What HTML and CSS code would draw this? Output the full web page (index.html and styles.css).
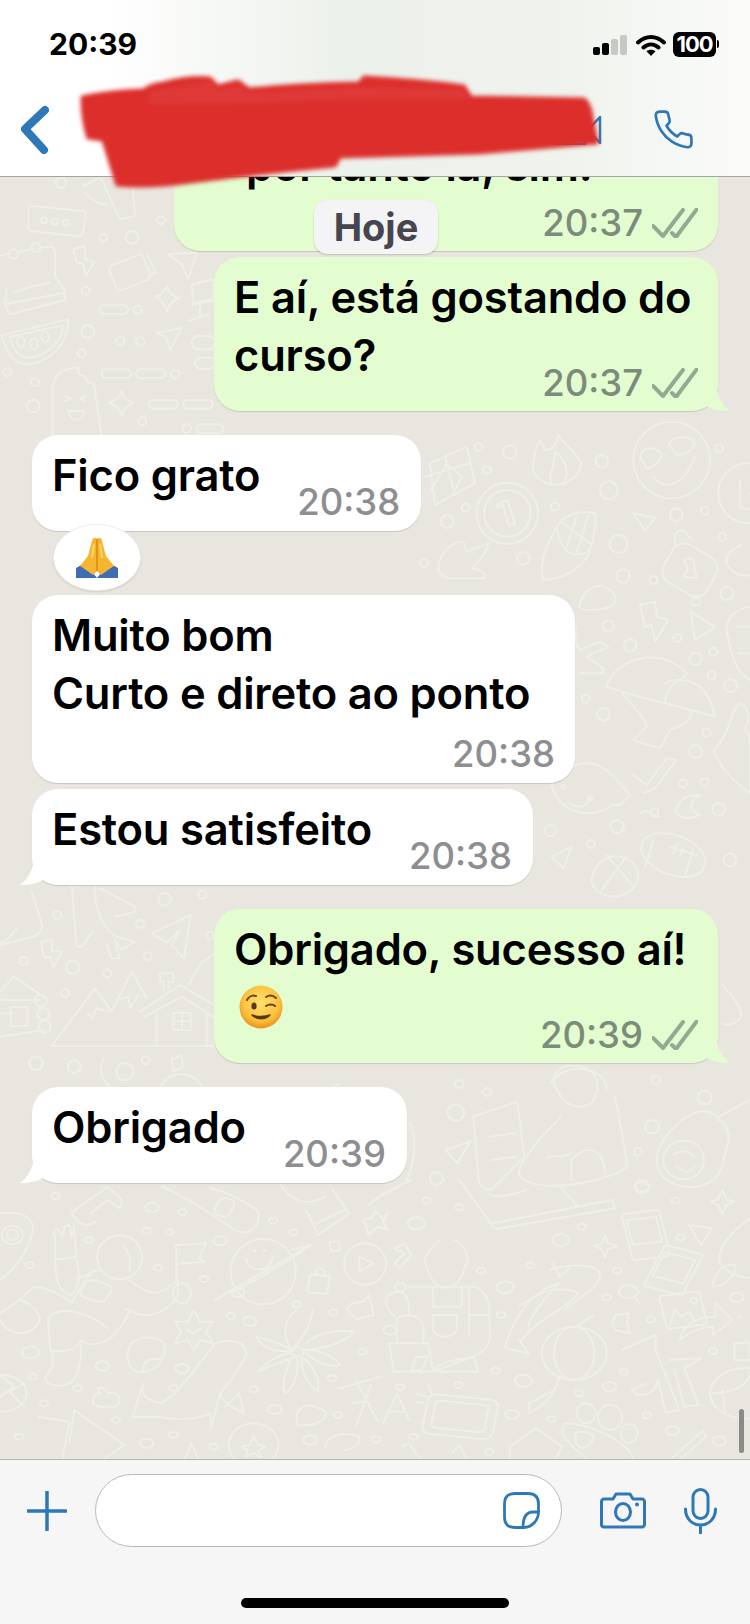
FILE: index.html
```html
<!DOCTYPE html>
<html lang="pt-BR">
<head>
    <meta charset="UTF-8">
    <meta name="viewport" content="width=device-width, initial-scale=1.0">
    <title>Conversa</title>
    <link rel="stylesheet" href="styles.css">
</head>
<body>
<div class="phone">
    <header class="topbar">
        <div class="status">
            <span class="clock">20:39</span>
            <div class="status-icons">
                <div class="signal"><i></i><i></i><i class="off"></i><i class="off"></i></div>
                <svg class="wifi" viewBox="0 0 30 22"><path d="M2 8.5C10 1 20 1 28 8.5M7.5 13.5c4.500-4 10.500-4 15 0" fill="none" stroke="#000" stroke-width="4" stroke-linecap="round"/><path d="M15 22l-4.500-4.800c2.700-2 6.300-2 9 0z"/></svg>
                <div class="battery"><span>100</span></div>
            </div>
        </div>
        <nav class="nav">
            <svg class="back" viewBox="0 0 30 49"><path d="M26 5L6 24l19 21" fill="none" stroke="#2f78b7" stroke-width="8" stroke-linecap="round" stroke-linejoin="round"/></svg>
            <div class="nav-actions">
                <svg class="video" viewBox="0 0 50 30"><path d="M3 1h30v28H3zM48 2v26L36 15z" fill="none" stroke="#2f78b7" stroke-width="2.500" stroke-linejoin="round"/></svg>
                <svg class="call" viewBox="0 0 24 24"><path d="M22 16.900v3a2 2 0 0 1-2.200 2 19.800 19.800 0 0 1-8.600-3.100 19.500 19.500 0 0 1-6-6A19.800 19.800 0 0 1 2.100 4.200 2 2 0 0 1 4.100 2h3a2 2 0 0 1 2 1.700c.1 1 .4 1.900.7 2.800a2 2 0 0 1-.5 2.100L8.100 9.900a16 16 0 0 0 6 6l1.300-1.300a2 2 0 0 1 2.100-.4c.9.3 1.800.6 2.800.7a2 2 0 0 1 1.700 2z" fill="none" stroke="#2f78b7" stroke-width="1.500" stroke-linejoin="round"/></svg>
            </div>
        </nav>
    </header>

    <svg class="scribble" viewBox="0 0 750 200">
        <path d="M82 97Q110 91 143 90 152 84 163 83 190 76 210 78L218 86 238 81 249 89Q300 84 359 83L364 77Q420 80 464 86L471 97 584 99Q590 103 592 117L597 143 478 153 340 157 335 166Q270 172 191 182 150 188 117 185L103 140 88 138Q82 120 82 97z" fill="#dc2f2c" stroke="#dc2f2c" stroke-width="3" stroke-linejoin="round"/>
        <path d="M150 92L210 81 217 90 239 85 248 93 359 87 464 90 468 99 359 99 248 103 150 104z" fill="#df3a38"/>
    </svg>

    <main class="chat">
        <svg class="doodles" viewBox="0 177 750 1282">
            <!-- upper left -->
            <g transform="translate(0 176) scale(.3333)">
                <path d="M95 90L250 105Q260 106 258 118L248 170Q246 182 234 181L95 165Q83 164 85 152L85 100Q86 89 95 90Z"/>
                <circle cx="132" cy="133" r="9"/><circle cx="165" cy="137" r="9"/><circle cx="197" cy="140" r="9"/>
                <circle cx="183" cy="20" r="16"/><circle cx="310" cy="185" r="12"/><circle cx="396" cy="184" r="19"/><circle cx="483" cy="133" r="12"/>
                <circle cx="257" cy="344" r="12"/><circle cx="413" cy="401" r="12"/><circle cx="263" cy="467" r="19"/><circle cx="361" cy="496" r="13"/><circle cx="421" cy="496" r="13"/><circle cx="245" cy="531" r="12"/><circle cx="22" cy="589" r="12"/><circle cx="105" cy="619" r="12"/><circle cx="100" cy="690" r="19"/><circle cx="526" cy="594" r="13"/><circle cx="427" cy="736" r="12"/><circle cx="560" cy="757" r="13"/>
                <rect x="298" y="388" width="86" height="26" rx="13"/><rect x="305" y="580" width="88" height="26" rx="13"/><rect x="408" y="580" width="88" height="26" rx="13"/><rect x="446" y="672" width="88" height="26" rx="13"/><rect x="550" y="672" width="88" height="26" rx="13"/><rect x="590" y="745" width="80" height="26" rx="13"/>
                <path d="M0 240L30 232M55 228L100 218M120 214L155 212Q165 214 165 230V300L192 340 195 372 30 415 14 385 20 340"/>
                <circle cx="40" cy="234" r="14"/><circle cx="108" cy="214" r="14"/><path d="M40 350L100 330 150 320M14 385L195 350"/>
                <path d="M220 220L255 210V250L283 258 258 297 248 262 230 260Z"/>
                <rect x="335" y="250" width="110" height="80" rx="14" transform="rotate(-22 390 290)"/><path d="M440 232L468 290 445 300"/>
                <path d="M5 478L205 430C205 510 140 565 80 565 40 565 15 520 5 478Z"/><path d="M30 482L190 448C185 505 130 545 85 545 55 545 38 515 30 482Z"/>
                <ellipse cx="62" cy="497" rx="11" ry="16"/><ellipse cx="102" cy="503" rx="11" ry="16"/><ellipse cx="135" cy="482" rx="11" ry="16"/>
                <path d="M500 330Q508 360 538 366 510 375 500 405 490 375 467 362 490 356 500 330Z"/><path d="M365 645Q373 672 400 682 374 690 365 718 356 690 328 682 356 672 365 645Z"/>
                <path d="M470 472L545 455 510 522 500 485Z"/>
                <path d="M158 780V640C158 595 190 575 235 575 232 592 242 602 255 600 256 615 270 625 282 622L305 780"/>
                <path d="M195 660L212 668 195 676M258 660L240 668 258 676M205 705H252C252 740 210 740 205 705Z"/>
                <path d="M250 30L300 5M255 50Q300 90 320 85M300 0L360 130 405 120 395 0"/>
                <path d="M575 325L640 310V370L580 380ZM575 385L640 375M565 435L625 415M600 380V420M505 235L590 230 565 310 545 265Z"/>
                <rect x="575" y="480" width="70" height="40" rx="20"/><rect x="585" y="545" width="60" height="34" rx="17"/>
            </g>
            <!-- left middle, between the bubbles -->
            <g transform="translate(0 880) scale(.3333)">
                <path d="M95 35L125 130Q130 160 100 170L0 195M50 145C30 175 15 185 0 190"/>
                <path d="M215 20L230 195Q240 210 252 190L278 155M285 20C280 80 310 150 350 170M300 25L405 80Q410 92 395 98L345 110M350 170L405 185 365 210 345 180 358 235 335 235 320 190"/>
                <circle cx="172" cy="105" r="12"/><circle cx="420" cy="132" r="12"/><circle cx="494" cy="58" r="19"/><circle cx="607" cy="44" r="12"/><circle cx="443" cy="229" r="12"/><circle cx="322" cy="280" r="12"/><circle cx="71" cy="243" r="12"/><circle cx="218" cy="262" r="20"/><circle cx="195" cy="339" r="12"/><circle cx="630" cy="167" r="12"/><circle cx="108" cy="550" r="20"/><circle cx="223" cy="560" r="19"/><circle cx="437" cy="541" r="12"/><circle cx="375" cy="575" r="26"/>
                <path d="M455 160L572 105 552 235 515 195 540 150 500 188Z"/>
                <path d="M122 185L155 178 155 212 185 215 160 262 150 230 132 232Z"/>
                <path d="M155 498L285 325 335 395 395 275 440 355M155 498H640M265 400L275 420 290 385 325 395M350 360L385 350 390 385 415 345"/>
                <path d="M420 395L540 315 650 380M435 410L545 350 640 410M470 400V498M620 400V498"/>
                <rect x="520" y="398" width="52" height="52"/><path d="M546 398V450M520 424H572"/>
                <path d="M490 330V305H480V280H520V305H505V325"/>
                <path d="M0 335L42 290 130 350M0 360H120M0 400H40M0 470L130 450"/><rect x="32" y="382" width="50" height="56"/><circle cx="122" cy="362" r="18"/><circle cx="130" cy="402" r="18"/><circle cx="134" cy="440" r="18"/>
                <path d="M570 310C590 260 620 230 650 220M310 535C295 570 305 600 330 620M480 630C490 570 580 565 610 625"/>
                <path d="M515 540L545 525 550 560 520 575Z"/>
            </g>
            <!-- right column -->
            <g transform="translate(420 420) scale(.3333)">
                <circle cx="755" cy="120" r="115"/><path d="M700 170C730 210 790 205 825 110"/>
                <path d="M660 110C670 70 720 85 725 105 720 130 690 145 680 145ZM745 75C765 40 815 50 825 70 815 95 790 105 775 105Z"/>
                <path d="M360 60C340 100 330 150 350 170 390 210 470 200 485 130 470 100 430 70 415 45 410 75 395 90 375 90Z"/><path d="M395 195C380 160 410 130 405 95 440 120 450 160 430 195"/>
                <circle cx="270" cy="96" r="20"/><circle cx="546" cy="124" r="19"/><circle cx="566" cy="211" r="27"/><circle cx="405" cy="260" r="12"/><circle cx="897" cy="85" r="12"/><circle cx="854" cy="272" r="12"/><circle cx="769" cy="284" r="19"/><circle cx="907" cy="350" r="12"/><circle cx="596" cy="372" r="27"/><circle cx="609" cy="468" r="20"/><circle cx="700" cy="480" r="12"/><circle cx="921" cy="520" r="20"/><circle cx="828" cy="545" r="12"/><circle cx="565" cy="618" r="17"/><circle cx="630" cy="676" r="19"/><circle cx="772" cy="654" r="12"/><circle cx="827" cy="716" r="19"/><circle cx="880" cy="695" r="12"/><circle cx="875" cy="765" r="12"/><circle cx="932" cy="797" r="19"/><circle cx="550" cy="883" r="19"/><circle cx="497" cy="836" r="12"/><circle cx="860" cy="938" r="12"/><circle cx="827" cy="995" r="19"/><circle cx="789" cy="1090" r="12"/><circle cx="853" cy="1087" r="12"/><circle cx="703" cy="1178" r="12"/><circle cx="896" cy="1168" r="19"/><circle cx="591" cy="1220" r="20"/><circle cx="513" cy="1272" r="12"/><circle cx="391" cy="1232" r="17"/><circle cx="930" cy="1320" r="19"/><circle cx="176" cy="82" r="12"/><circle cx="201" cy="150" r="12"/><circle cx="137" cy="263" r="12"/><circle cx="82" cy="305" r="19"/><circle cx="310" cy="415" r="19"/><circle cx="12" cy="430" r="12"/>
                <path d="M30 130L140 80 165 190 45 255ZM15 170L150 130M75 105L105 225M30 215L80 130 125 170 100 220"/>
                <circle cx="262" cy="280" r="92"/><circle cx="262" cy="280" r="70"/><path d="M230 255L262 240 285 310 265 315 250 255 235 265Z"/>
                <path d="M370 480C350 420 400 340 410 320 420 390 450 420 510 395 490 440 430 480 370 480ZM410 320C440 280 480 270 525 280 530 320 520 370 505 395"/><path d="M430 310L510 370M470 290L440 380M505 285L470 400"/>
                <path d="M55 440C60 400 100 360 130 365L140 395 205 370C200 400 170 430 155 445 190 450 205 470 190 475H100C70 475 55 460 55 440Z"/>
                <path d="M640 280L705 292 675 332Z"/>
                <rect x="735" y="385" width="150" height="130" rx="40" transform="rotate(30 810 450)"/><path d="M765 375V345Q775 325 795 335L815 360"/><path d="M795 430C785 415 815 405 820 425L830 475 790 470 805 445Z"/>
                <path d="M925 440C910 420 925 390 965 375M925 440C945 465 970 470 990 465"/>
                <path d="M480 550C500 490 560 480 585 530 600 565 540 570 500 570 480 570 475 560 480 550Z"/>
                <path d="M660 555L705 545 710 590 745 600 705 665 695 615 675 620Z"/><path d="M812 575L885 622 825 660Z"/>
                <path d="M470 620C460 660 470 680 480 690L540 665 565 680 500 710 550 745 550 760H480"/>
                <path d="M560 800C580 720 720 670 800 760 810 770 740 780 735 850 690 840 620 820 560 800ZM735 790C780 770 860 770 885 890L735 850"/><path d="M605 820C640 860 680 900 680 920L640 960 720 985 750 930C790 920 820 890 815 870"/>
                <path d="M635 1060L680 1095 740 1015 770 1020 705 1105 670 1120"/>
                <path d="M395 1100C390 1060 450 1030 510 1030 560 1035 590 1080 630 1125L600 1155 575 1155C540 1190 430 1200 395 1100Z"/><circle cx="510" cy="1135" r="6"/><circle cx="430" cy="1100" r="6"/><path d="M450 1150C480 1170 500 1160 510 1135"/>
                <path d="M765 1175C790 1120 810 1125 840 1125 810 1140 800 1170 840 1185 810 1200 780 1195 765 1175Z"/>
                <ellipse cx="760" cy="1305" rx="100" ry="60" transform="rotate(20 760 1305)"/><path d="M700 1265L675 1340M820 1290L795 1370M745 1280L830 1305M770 1275L760 1300M790 1285L780 1310"/>
                <path d="M395 1310L455 1280 430 1345Z"/><path d="M520 1360C540 1310 590 1290 640 1330 670 1370 650 1420 590 1430 540 1430 500 1400 520 1360ZM560 1305L640 1400M620 1310L545 1410"/>
                <path d="M880 990C930 950 930 870 960 850 990 860 990 900 975 930 985 940 990 950 990 960V1120C960 1100 900 1050 880 990Z"/>
                <path d="M925 650C905 600 950 565 990 560M925 650C930 700 950 760 990 780M950 620H990M955 700H990"/>
                <circle cx="985" cy="220" r="90"/><path d="M960 180V260C990 280 1010 260 990 220"/>
                <path d="M660 1180C680 1160 700 1190 720 1190"/>
            </g>
            <!-- lower right, person and avocado -->
            <g transform="translate(200 960) scale(.3505 .3333)">
                <path d="M780 470L905 425 925 590 830 690Q800 690 795 660ZM825 530L900 520M830 600L900 590"/>
                <path d="M1010 370C1005 320 1050 310 1090 320 1130 330 1150 380 1120 425 1090 450 1040 450 1010 370Z"/><path d="M1030 470C1000 500 910 600 910 640 930 690 1060 690 1190 640L1220 620 1185 410"/>
                <path d="M1060 600V660M1060 600C1100 550 1150 560 1155 640M990 590C1030 590 1040 590 1060 580"/>
                <circle cx="730" cy="458" r="24"/><circle cx="740" cy="372" r="12"/><circle cx="820" cy="396" r="12"/><circle cx="1300" cy="360" r="12"/><circle cx="1290" cy="500" r="20"/><circle cx="1250" cy="575" r="12"/><circle cx="1260" cy="680" r="20"/><circle cx="675" cy="655" r="19"/><circle cx="1440" cy="412" r="20"/>
                <path d="M1480 480C1530 510 1500 560 1490 620 1470 690 1370 700 1320 650 1280 590 1320 520 1390 470 1440 440 1470 460 1480 480Z"/><circle cx="1380" cy="600" r="58"/><path d="M1350 585C1370 570 1390 570 1410 590M1360 620C1380 640 1400 640 1410 620"/>
                <path d="M1480 470L1568 420M200 600C250 470 320 410 400 370"/>
                <path d="M600 490C620 540 610 620 590 660M700 570L770 545 735 610Z"/>
                <path d="M1000 370C1040 300 1160 320 1160 390M1490 75C1520 110 1540 130 1545 170 1530 190 1510 200 1490 190"/>
            </g>
            <!-- bottom band -->
            <g transform="translate(0 1180) scale(.4785 .3333)">
                <ellipse cx="26" cy="165" rx="22" ry="28"/><ellipse cx="26" cy="165" rx="12" ry="16"/><path d="M0 100C50 90 80 120 65 170 55 220 30 270 0 300"/>
                <circle cx="62" cy="255" r="9"/><circle cx="116" cy="48" r="9"/><circle cx="318" cy="82" r="14"/><circle cx="381" cy="97" r="9"/><circle cx="306" cy="152" r="9"/><circle cx="354" cy="156" r="9"/><circle cx="460" cy="182" r="14"/><circle cx="571" cy="122" r="9"/><circle cx="613" cy="157" r="9"/><circle cx="186" cy="180" r="9"/><circle cx="330" cy="263" r="9"/><circle cx="426" cy="297" r="9"/><circle cx="620" cy="373" r="9"/><circle cx="696" cy="397" r="9"/><circle cx="483" cy="407" r="9"/><circle cx="522" cy="424" r="14"/><circle cx="64" cy="517" r="18"/><circle cx="214" cy="558" r="14"/><circle cx="380" cy="566" r="14"/><circle cx="68" cy="590" r="9"/><circle cx="162" cy="625" r="9"/><circle cx="92" cy="670" r="9"/><circle cx="362" cy="624" r="9"/><circle cx="530" cy="627" r="9"/><circle cx="694" cy="594" r="9"/><circle cx="757" cy="515" r="9"/><circle cx="836" cy="622" r="9"/><circle cx="574" cy="688" r="14"/><circle cx="706" cy="705" r="9"/><circle cx="958" cy="615" r="9"/><circle cx="1036" cy="572" r="9"/><circle cx="1070" cy="703" r="14"/><circle cx="1094" cy="602" r="18"/><circle cx="1152" cy="718" r="9"/><circle cx="1210" cy="640" r="9"/><circle cx="1274" cy="620" r="14"/><circle cx="1303" cy="575" r="9"/><circle cx="1352" cy="706" r="9"/><circle cx="1405" cy="752" r="14"/><circle cx="1490" cy="513" r="9"/><circle cx="1360" cy="418" r="9"/><circle cx="1268" cy="352" r="9"/><circle cx="1290" cy="272" r="9"/><circle cx="1108" cy="256" r="9"/><circle cx="1005" cy="272" r="9"/><circle cx="1056" cy="322" r="18"/><circle cx="1047" cy="405" r="9"/><circle cx="1172" cy="180" r="18"/><circle cx="1216" cy="140" r="9"/><circle cx="960" cy="82" r="9"/><circle cx="891" cy="62" r="9"/><circle cx="870" cy="130" r="18"/><circle cx="1342" cy="20" r="14"/><circle cx="1412" cy="62" r="9"/><circle cx="1422" cy="172" r="9"/><circle cx="1540" cy="352" r="14"/><circle cx="40" cy="770" r="9"/><circle cx="242" cy="720" r="9"/><circle cx="306" cy="790" r="14"/><circle cx="362" cy="765" r="9"/><circle cx="447" cy="800" r="9"/><circle cx="648" cy="780" r="14"/><circle cx="786" cy="778" r="9"/><circle cx="864" cy="770" r="9"/><circle cx="1022" cy="815" r="9"/><circle cx="1503" cy="783" r="14"/>
                <path d="M115 190V170C105 150 125 135 130 170L135 140 145 135 150 170 155 140 160 230 115 240ZM115 240C115 290 120 340 150 345 170 310 165 280 160 240"/>
                <ellipse cx="250" cy="232" rx="47" ry="66"/><path d="M255 195C270 210 275 240 270 270"/>
                <path d="M150 370C180 290 190 270 210 270M160 300L200 270"/><rect x="172" y="305" width="58" height="55" rx="14" transform="rotate(25 200 332)"/>
                <path d="M270 300C300 330 310 350 345 330L372 300 372 350C340 410 300 420 262 385"/><ellipse cx="380" cy="340" rx="19" ry="30"/>
                <path d="M368 300V195L430 190 415 235 428 245 368 252"/>
                <path d="M0 400L40 360 70 322C100 320 130 350 150 365M40 360C70 370 90 410 80 430 60 470 20 470 0 420"/>
                <path d="M100 420C110 380 170 380 225 445M100 420L105 510C130 520 160 510 168 480 200 510 240 490 272 390M110 510V560L95 590C95 620 130 625 150 605 170 575 170 520 168 490"/>
                <path d="M275 490C300 460 340 470 345 500 345 550 320 580 290 575 265 570 260 520 275 490Z"/><path d="M300 570C295 540 320 530 340 540"/>
                <path d="M405 390L418 425 445 425 430 455 445 490 418 480 405 510 392 480 365 490 378 455 365 425 392 425Z"/><path d="M390 450L402 460 420 445"/>
                <ellipse cx="550" cy="275" rx="68" ry="98"/><path d="M515 235C515 275 565 285 570 230"/><circle cx="532" cy="212" r="2"/><circle cx="552" cy="212" r="2"/>
                <path d="M450 360L490 325 650 195 610 210M480 340C510 320 610 240 650 195M450 360L480 330"/><circle cx="497" cy="337" r="14"/>
                <path d="M340 20C400 60 470 130 490 150 520 170 545 140 540 95 510 60 470 35 440 25"/>
                <rect x="452" y="55" width="34" height="55" rx="14" transform="rotate(20 470 82)"/>
                <path d="M150 100C170 70 200 50 225 20M150 100C160 130 180 145 200 125M225 20L255 60 250 85 225 60 190 100"/>
                <path d="M580 0C610 70 640 80 680 50M640 90L665 165 730 100 695 30M660 130L720 90"/>
                <path d="M770 75C790 50 830 20 860 0M770 75L800 40"/>
                <path d="M785 95L800 115 810 100 800 125 810 150 790 140 770 165 765 135 757 120 775 115Z"/>
                <ellipse cx="763" cy="252" rx="44" ry="62"/><path d="M750 230L780 250 752 275Z"/>
                <rect x="690" y="185" width="20" height="28" rx="5" transform="rotate(-10 700 200)"/>
                <path d="M845 190L860 225 835 265 825 250 845 220 825 205Z"/>
                <rect x="645" y="285" width="42" height="55" rx="6" transform="rotate(8 665 312)"/><path d="M660 285C658 255 680 260 680 290"/>
                <path d="M735 370L760 365 770 345 778 380 780 405 745 418 725 390Z"/>
                <path d="M620 390C590 420 590 470 610 510 640 460 650 430 655 390M610 510C570 480 540 470 535 470 550 510 590 520 610 510M640 490C670 450 710 450 740 455 720 490 670 510 630 510M625 530C590 540 560 560 540 575 560 540 590 520 610 520M640 520C670 560 700 560 710 555 700 530 670 510 640 510M610 530C590 590 590 620 595 640 620 620 625 560 620 530M630 530C630 590 650 620 665 635 670 590 650 550 630 530"/><circle cx="622" cy="515" r="13"/>
                <path d="M300 610C290 650 310 660 335 670 370 650 410 560 450 490 500 470 525 500 510 540 490 590 470 620 460 640 470 680 500 690 510 700L500 640 470 680M300 610C280 680 285 700 275 710H330C370 720 410 720 440 700L440 750 460 640"/>
                <path d="M210 640C190 640 185 680 210 680H240C260 670 250 630 225 640 215 610 195 625 210 640Z"/>
                <path d="M620 700C640 660 660 680 680 695 685 720 660 740 620 735Z"/>
                <path d="M710 625L795 590M745 605L790 725M775 615L745 735M735 670L760 665M800 730L830 640 855 720M815 695H845"/>
                <rect x="888" y="650" width="148" height="120" rx="20" transform="rotate(8 960 710)"/><rect x="905" y="668" width="112" height="82" rx="10" transform="rotate(8 960 710)"/><path d="M870 640L890 650M870 665L885 668M895 615L902 640"/>
                <path d="M920 180C900 200 880 240 890 255 900 300 910 320 930 325 960 320 970 280 970 260 985 240 975 200 950 180 925 170 920 180ZM920 170C910 140 970 120 975 180M890 250C930 250 960 230 940 210"/>
                <path d="M855 320H990C1020 330 1025 380 1022 410 1030 490 1020 510 990 530L905 575M905 325V380H965V325M905 405H955V450C940 480 915 475 905 450ZM980 405H1022M980 330V470"/>
                <path d="M813 490H895L905 575H823ZM830 490V415C840 400 880 400 885 440V490"/>
                <path d="M825 410C800 380 800 340 830 335 855 335 855 370 855 400"/><circle cx="837" cy="322" r="12"/><circle cx="815" cy="450" r="14"/>
                <path d="M990 530L1000 575H905C915 545 950 540 990 530M870 530H895L880 570H860Z"/>
                <path d="M1055 505C1070 420 1110 330 1170 310 1120 380 1105 420 1105 445M1085 380C1120 340 1170 310 1210 340 1170 400 1120 420 1090 480M1055 505L1105 520 1085 480M1150 270C1190 250 1250 250 1255 285 1250 330 1200 360 1180 390M1155 250L1170 290 1190 265"/>
                <ellipse cx="1200" cy="520" rx="68" ry="80"/><ellipse cx="1200" cy="520" rx="42" ry="80"/><path d="M1205 440L1240 405M1170 590L1160 625C1150 660 1130 680 1105 700V670L1160 630"/>
                <path d="M1285 405L1315 400 1310 425 1315 460 1285 450 1280 430Z"/>
                <path d="M1300 510L1370 465 1370 510 1420 690 1392 698 1375 600M1350 610L1320 630C1340 660 1370 640 1375 600M1400 540L1465 535 1430 565 1460 675 1430 680 1410 570"/>
                <ellipse cx="1225" cy="700" rx="20" ry="30"/><ellipse cx="1275" cy="712" rx="25" ry="38"/><ellipse cx="1315" cy="760" rx="18" ry="28"/>
                <path d="M1180 730C1230 730 1310 780 1325 840H1230C1190 790 1165 770 1180 730ZM1205 770C1190 750 1240 750 1240 775 1240 790 1225 800 1220 805 1205 800 1200 785 1205 770Z"/>
                <path d="M1065 800L1120 745 1175 800 1160 840M1065 800V840"/>
                <path d="M1020 40C1030 50 1050 55 1100 30M960 0L1035 148 1285 85 1280 60 1030 130M1170 20L1205 75"/>
                <rect x="1310" y="95" width="80" height="140" rx="6" transform="rotate(-10 1350 165)"/><rect x="1318" y="115" width="62" height="75" transform="rotate(-10 1350 165)"/>
                <rect x="1365" y="205" width="85" height="130" rx="6" transform="rotate(20 1405 270)"/><rect x="1372" y="225" width="68" height="75" transform="rotate(20 1405 270)"/>
                <rect x="1385" y="340" width="85" height="100" rx="6" transform="rotate(-10 1430 390)"/><path d="M1400 440L1410 390 1425 410 1440 395 1450 420"/><circle cx="1450" cy="362" r="8"/>
                <path d="M1420 480C1430 420 1470 410 1495 410V370L1530 420 1490 465V440C1460 440 1440 460 1420 480Z"/>
                <path d="M1265 165L1270 190 1290 198 1270 208 1265 232 1258 208 1242 198 1258 190ZM1510 30L1518 58 1535 65 1518 75 1510 102 1500 75 1484 65 1500 58ZM1440 135L1488 145 1465 195Z"/>
                <circle cx="1313" cy="335" r="20"/><path d="M1328 352L1336 370"/>
                <path d="M1568 115C1530 150 1495 210 1505 250 1520 280 1540 290 1568 295M1490 310C1500 260 1520 250 1535 255 1540 290 1510 320 1490 320Z"/>
                <path d="M1555 480L1568 490M1535 490H1568V540H1535Z"/>
                <circle cx="1545" cy="410" r="2"/>
                <circle cx="1560" cy="640" r="76"/><path d="M1490 640C1520 640 1570 620 1568 570M1510 630L1515 700"/>
                <circle cx="0" cy="640" r="56"/><path d="M0 585L30 620 0 650M20 635L50 610M20 635L50 680"/>
                <path d="M80 710L145 725 130 840M155 690L260 795 215 840M155 690L145 790"/>
                <ellipse cx="530" cy="795" rx="52" ry="65"/><path d="M530 770L540 795 555 800 540 812 545 830 530 820 515 830 518 812 505 800 522 795Z"/>
                <path d="M400 790L415 840H385ZM680 800C680 770 720 750 750 770 755 790 735 810 720 810"/>
                <path d="M840 800L855 790 880 840M945 820L960 795 975 835"/>
                <path d="M1400 840L1470 750 1475 770 1420 840"/>
            </g>
        </svg>

        <div class="messages">
            <div class="bubble out first">
                <p class="text">por tanto lá, sim.</p>
                <div class="meta">
                    <span class="time">20:37</span>
                    <svg class="ticks" viewBox="0 0 46 30"><path d="M1 18l10 10L31 2M20 25l4 4L45 1" fill="none" stroke="#95a893" stroke-width="4" stroke-linecap="round" stroke-linejoin="round"/></svg>
                </div>
            </div>
            <div class="bubble out tail">
                <p class="text">E aí, está gostando do curso?</p>
                <div class="meta">
                    <span class="time">20:37</span>
                    <svg class="ticks" viewBox="0 0 46 30"><path d="M1 18l10 10L31 2M20 25l4 4L45 1" fill="none" stroke="#95a893" stroke-width="4" stroke-linecap="round" stroke-linejoin="round"/></svg>
                </div>
            </div>
            <div class="bubble in inline has-reaction">
                <p class="text">Fico grato</p>
                <span class="time">20:38</span>
                <div class="reaction">
                    <svg class="pray" viewBox="0 0 42 41">
                        <path d="M0 41V31l9-5 12 15zM42 41V31l-9-5-12 15z" fill="#3f6db3"/>
                        <path d="M21 34V2C18-1 16 2 15.500 6L12 19 4 29l6 4 7 5zM21 34V2c3-3 5 0 5.500 4L30 19l8 10-6 4-7 5z" fill="#f6b52e"/>
                        <path d="M21 2v32" stroke="#d98a16" stroke-width="1.500"/>
                        <path d="M18 7l-2 14M24 7l2 14" stroke="#fcd668" stroke-width="2" fill="none"/>
                    </svg>
                </div>
            </div>
            <div class="bubble in wide">
                <p class="text">Muito bom<br>Curto e direto ao ponto</p>
                <div class="meta below"><span class="time">20:38</span></div>
            </div>
            <div class="bubble in inline tail tight">
                <p class="text">Estou satisfeito</p>
                <span class="time">20:38</span>
            </div>
            <div class="bubble out tail gap">
                <p class="text">Obrigado, sucesso aí!</p>
                <div class="emoji-line">
                    <svg class="wink" viewBox="0 0 44 44">
                        <defs><radialGradient id="face" cx=".5" cy=".4" r=".6"><stop offset="0" stop-color="#ffe070"/><stop offset=".7" stop-color="#fbc23c"/><stop offset="1" stop-color="#ec8f1e"/></radialGradient></defs>
                        <circle cx="22" cy="22" r="21.500" fill="url(#face)"/>
                        <ellipse cx="15" cy="21" rx="2.600" ry="3.600" fill="#5a3a12"/>
                        <path d="M8 15c2-4 6-5 9-4M27 12c3-2 7-2 10 1M27 21c3-2 7-2 9 0" fill="none" stroke="#6a4414" stroke-width="2" stroke-linecap="round"/>
                        <path d="M13 30c5 5 13 5 18 0-5 2-13 2-18 0z" fill="#5a3a12" stroke="#5a3a12" stroke-width="1.500" stroke-linejoin="round"/>
                    </svg>
                </div>
                <div class="meta">
                    <span class="time">20:39</span>
                    <svg class="ticks" viewBox="0 0 46 30"><path d="M1 18l10 10L31 2M20 25l4 4L45 1" fill="none" stroke="#95a893" stroke-width="4" stroke-linecap="round" stroke-linejoin="round"/></svg>
                </div>
            </div>
            <div class="bubble in inline tail gap">
                <p class="text">Obrigado</p>
                <span class="time">20:39</span>
            </div>
        </div>

        <div class="day-chip">Hoje</div>
        <div class="scroll-thumb"></div>
    </main>

    <footer class="composer">
        <div class="composer-row">
            <svg class="plus" viewBox="0 0 40 40"><path d="M20 1v38M1 20h38" stroke="#2f78b7" stroke-width="3.500" stroke-linecap="round"/></svg>
            <div class="input">
                <svg class="sticker" viewBox="0 0 37 37"><path d="M35.500 20C35.500 28 29 35.500 21 35.500H12C5 35.500 1.500 32 1.500 25V12C1.500 5 5 1.500 12 1.500H25C32 1.500 35.500 5 35.500 12zM35.500 20H30C24 20 20 25 20 35.500" fill="none" stroke="#2f78b7" stroke-width="2.800"/></svg>
            </div>
            <svg class="camera" viewBox="0 0 46 37"><path d="M4 7h9l3-5h14l3 5h9a2.500 2.500 0 0 1 2.500 2.500v23A2.500 2.500 0 0 1 42 35H4a2.500 2.500 0 0 1-2.500-2.500v-23A2.500 2.500 0 0 1 4 7z" fill="none" stroke="#2f78b7" stroke-width="3" stroke-linejoin="round"/><ellipse cx="23" cy="20" rx="7.500" ry="8.500" fill="none" stroke="#2f78b7" stroke-width="3"/><circle cx="37" cy="12.500" r="2" fill="#2f78b7"/></svg>
            <svg class="mic" viewBox="0 0 33 46"><rect x="9" y="1.500" width="15" height="29" rx="7.500" fill="none" stroke="#2f78b7" stroke-width="3"/><path d="M1.500 21c0 10 7 16 15 16s15-6 15-16M16.500 37v8" fill="none" stroke="#2f78b7" stroke-width="3" stroke-linecap="round"/></svg>
        </div>
        <div class="home-bar"></div>
    </footer>
</div>
</body>
</html>
```

FILE: styles.css
```css
* {
    box-sizing: border-box;
}
body {
    margin: 0;
    background: #e9e6df;
    font-family: Inter, "Liberation Sans", Arial, sans-serif;
    color: #000;
}
.phone {
    position: relative;
    width: 750px;
    height: 1624px;
    display: flex;
    flex-direction: column;
    overflow: hidden;
}

/* top bar */
.topbar {
    height: 177px;
    flex-shrink: 0;
    padding-top: 32px;
    background: linear-gradient(90deg, #fff 0, #fff 14%, #edf1eb 45%, #eff2ed 75%, #fbfcfa 100%);
    border-bottom: 1px solid #a5a59f;
}
.status {
    height: 25px;
    display: flex;
    justify-content: space-between;
    align-items: center;
    padding: 0 34px 0 49px;
}
.clock {
    font-size: 30px;
    font-weight: 700;
    line-height: 25px;
}
.status-icons {
    display: flex;
    align-items: center;
}
.signal {
    display: flex;
    align-items: flex-end;
    gap: 2px;
    height: 20px;
    margin-right: 9px;
}
.signal i {
    width: 7px;
    background: #000;
    border-radius: 2px;
}
.signal i:nth-child(1) { height: 8px; }
.signal i:nth-child(2) { height: 12px; }
.signal i:nth-child(3) { height: 16px; }
.signal i:nth-child(4) { height: 20px; }
.signal i.off {
    background: #c6c8c4;
}
.wifi {
    width: 30px;
    height: 22px;
    margin-right: 7px;
}
.battery {
    position: relative;
    width: 43px;
    height: 25px;
    background: #000;
    border-radius: 6px;
    color: #fff;
    text-align: center;
}
.battery::after {
    content: "";
    position: absolute;
    right: -3px;
    top: 8px;
    width: 2px;
    height: 8px;
    background: #000;
    border-radius: 0 2px 2px 0;
}
.battery span {
    font-size: 22px;
    font-weight: 700;
    line-height: 25px;
    letter-spacing: -1px;
}
.nav {
    display: flex;
    justify-content: space-between;
    align-items: center;
    height: 49px;
    margin-top: 48px;
    padding: 0 55px 0 19px;
}
.back {
    width: 30px;
    height: 49px;
}
.nav-actions {
    display: flex;
    align-items: center;
    gap: 50px;
}
.video {
    width: 50px;
    height: 30px;
}
.call {
    width: 43px;
    height: 43px;
}
.scribble {
    position: absolute;
    left: 0;
    top: 0;
    width: 750px;
    height: 200px;
    z-index: 5;
    filter: blur(2px);
}

/* chat */
.chat {
    position: relative;
    flex: 1;
    overflow: hidden;
    background: #e9e6df;
}
.doodles {
    position: absolute;
    left: 0;
    top: 0;
    width: 750px;
    height: 1282px;
    fill: none;
    stroke: #f0eee9;
    stroke-width: 2;
    stroke-linecap: round;
    stroke-linejoin: round;
}
.doodles * {
    vector-effect: non-scaling-stroke;
}
.messages {
    position: relative;
    display: flex;
    flex-direction: column;
    align-items: flex-start;
    padding: 0 32px;
}
.bubble {
    position: relative;
    padding: 11px 20px 10px;
    border-radius: 26px;
    box-shadow: 0 1px 1px rgba(0, 0, 0, 0.14);
}
.bubble.in {
    background: #fff;
}
.bubble.out {
    width: 504px;
    align-self: flex-end;
    background: #e3fdd0;
}
.text {
    margin: 0;
    font-size: 43.500px;
    font-weight: 600;
    letter-spacing: -0.2px;
    line-height: 58px;
}
.time {
    font-size: 36.500px;
    font-weight: 500;
    line-height: 36px;
    color: #8e8e90;
    white-space: nowrap;
}
.out .time {
    color: #7d8c7a;
}
.meta {
    display: flex;
    justify-content: flex-end;
    align-items: center;
    gap: 9px;
    height: 36px;
    margin-top: -19px;
}
.meta.below {
    margin-top: 14px;
}
.ticks {
    width: 46px;
    height: 30px;
}
.bubble.first {
    width: 544px;
    margin-top: -52px;
    padding-left: 72px;
}
.bubble.first .meta {
    margin-top: 11px;
}
.bubble.first + .bubble {
    margin-top: 6px;
}
.bubble.inline {
    display: flex;
    align-items: flex-start;
    gap: 37px;
    padding-bottom: 11px;
    padding-right: 21px;
}
.bubble.inline .time {
    margin-top: 38px;
}
.bubble.has-reaction {
    margin-top: 24px;
}
.bubble.wide {
    width: 543px;
    margin-top: 64px;
    padding-bottom: 11px;
}
.bubble.tight {
    margin-top: 6px;
}
.bubble.gap {
    margin-top: 24px;
}
.bubble.tail::after {
    content: "";
    position: absolute;
    bottom: 0;
    width: 24px;
    height: 26px;
    background: inherit;
}
.bubble.out.tail::after {
    right: -12px;
    clip-path: path("M10 0C11 11 16 20 24 26C16 26 8 25 1 21Z");
}
.bubble.in.tail::after {
    left: -12px;
    clip-path: path("M14 0C13 11 8 20 0 26C8 26 16 25 23 21Z");
}
.reaction {
    position: absolute;
    left: 21px;
    top: 89px;
    width: 88px;
    height: 67px;
    display: flex;
    align-items: center;
    justify-content: center;
    background: #fff;
    border: 1px solid #eeeeea;
    border-radius: 50%;
    box-shadow: 0 1px 2px rgba(0, 0, 0, 0.12);
}
.pray {
    width: 42px;
    height: 41px;
}
.emoji-line {
    height: 58px;
    display: flex;
    align-items: center;
    padding-left: 5px;
}
.wink {
    width: 44px;
    height: 44px;
}
.day-chip {
    position: absolute;
    left: 314px;
    top: 23px;
    width: 124px;
    height: 54px;
    background: #f4f4f6;
    border-radius: 14px;
    box-shadow: 0 1px 2px rgba(0, 0, 0, 0.18);
    color: #46464e;
    font-size: 38px;
    font-weight: 700;
    line-height: 54px;
    text-align: center;
}
.scroll-thumb {
    position: absolute;
    right: 6px;
    top: 1232px;
    width: 5px;
    height: 44px;
    background: #8a8a88;
    border-radius: 3px;
}

/* composer */
.composer {
    height: 165px;
    flex-shrink: 0;
    padding-top: 14px;
    background: #f6f6f6;
    border-top: 1px solid #b4b4b0;
}
.composer-row {
    display: flex;
    align-items: center;
    height: 73px;
    padding-left: 27px;
}
.plus {
    width: 40px;
    height: 40px;
    margin-right: 28px;
}
.input {
    width: 467px;
    height: 73px;
    margin-right: 38px;
    padding-right: 21px;
    display: flex;
    justify-content: flex-end;
    align-items: center;
    background: #fff;
    border: 1px solid #b9b9b9;
    border-radius: 37px;
}
.sticker {
    width: 37px;
    height: 37px;
}
.camera {
    width: 46px;
    height: 37px;
    margin-right: 38px;
}
.mic {
    width: 33px;
    height: 46px;
}
.home-bar {
    width: 268px;
    height: 10px;
    margin: 51px auto 0;
    background: #000;
    border-radius: 5px;
}
```
